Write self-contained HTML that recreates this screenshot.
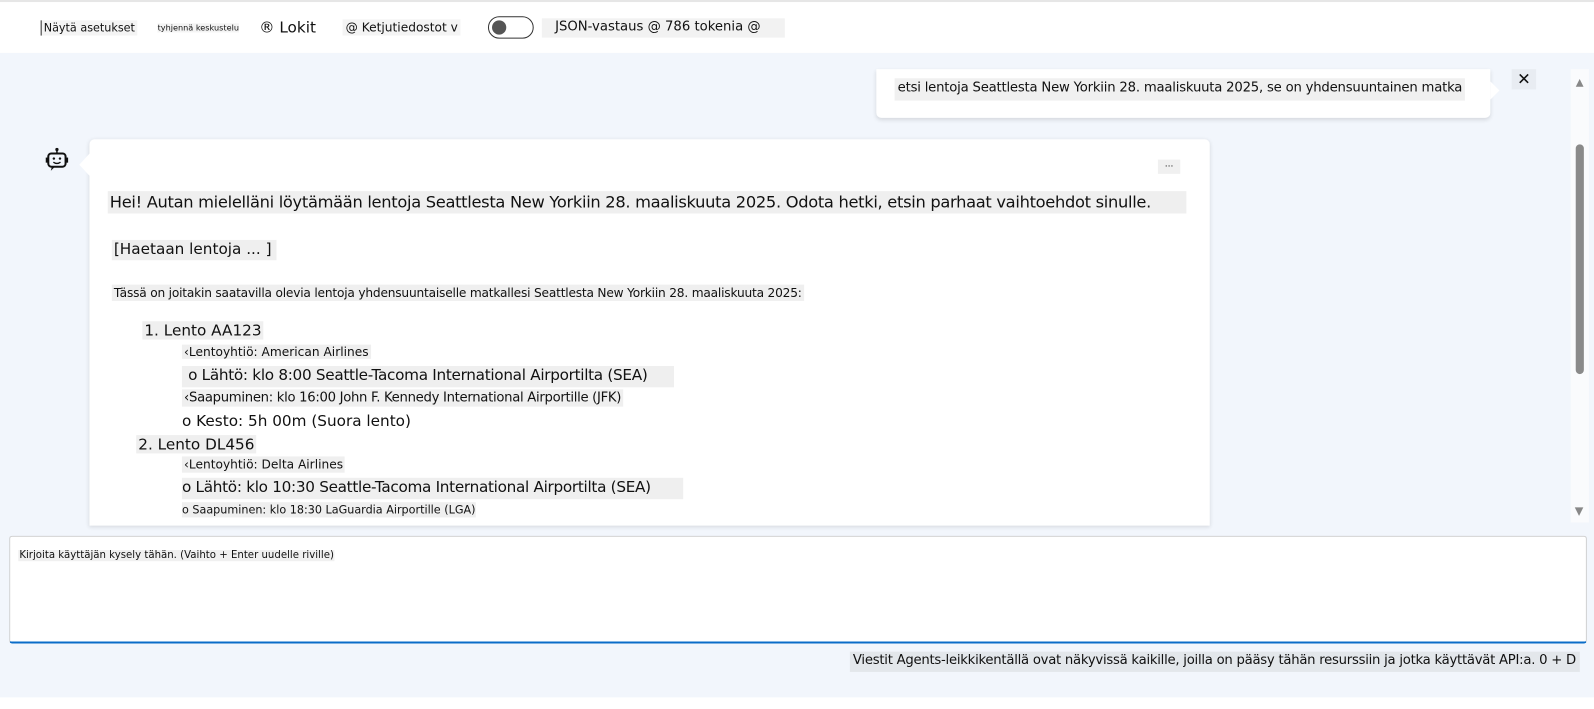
<!DOCTYPE html>
<html><head><meta charset="utf-8"><style>
*{margin:0;padding:0;box-sizing:border-box}
body{width:1594px;height:708px;background:#fff;font-family:"DejaVu Sans","Liberation Sans",sans-serif;color:#111;position:relative;overflow:hidden}
#w{position:absolute;left:0;top:0;width:1568px;height:697px;transform:scale(1.0166);transform-origin:0 0}
.a{position:absolute;white-space:nowrap}
.g{background:#efefef}
</style></head><body><div id="w">
<div class="a" style="left:0;top:0;width:1568px;height:2px;background:#e6e6e6"></div>
<div class="a" style="left:0;top:52px;width:1568px;height:634px;background:#f2f6fc"></div>
<!-- toolbar -->
<div class="a" style="left:40px;top:20px;font-size:11px;padding:1px 2px;border-left:1px solid #333;background:#f4f4f4">Näytä asetukset</div>
<div class="a" style="left:155px;top:23px;font-size:8px;background:#f4f4f4">tyhjennä keskustelu</div>
<div class="a" style="left:255px;top:18px;font-size:15px">® Lokit</div>
<div class="a" style="left:337px;top:19px;font-size:12px;background:#f4f4f4;padding:1px 3px">@ Ketjutiedostot v</div>
<div class="a" style="left:480px;top:16px;width:45px;height:22px;border:1.5px solid #333;border-radius:11px"><div style="position:absolute;left:3px;top:3px;width:14px;height:14px;border-radius:50%;background:#555"></div></div>
<div class="a" style="left:533px;top:18px;width:239px;height:19px;background:#f2f2f2;font-size:13px;padding:1px 0 0 13px">JSON-vastaus @ 786 tokenia @</div>
<!-- user bubble -->
<div class="a" style="left:862px;top:68px;width:604px;height:48px;background:#fff;border-radius:0 0 5px 5px;box-shadow:0 2px 4px rgba(0,0,0,.12)"></div>
<div class="a" style="left:1466px;top:80px;width:0;height:0;border-top:9px solid transparent;border-bottom:9px solid transparent;border-left:9px solid #fff"></div>
<div class="a" style="left:880px;top:77px;height:22px;background:#f0f0f0;font-size:13px;padding:2px 3px;letter-spacing:-0.2px">etsi lentoja Seattlesta New Yorkiin 28. maaliskuuta 2025, se on yhdensuuntainen matka</div>
<div class="a" style="left:1487px;top:68px;width:24px;height:20px;background:#e8ecf2;font-size:16px;text-align:center;line-height:20px">✕</div>
<!-- scrollbar -->
<div class="a" style="left:1545px;top:68px;width:18px;height:446px;background:#fafbfd"></div>
<div class="a" style="left:1550px;top:76px;font-size:10px;color:#888">▲</div>
<div class="a" style="left:1550px;top:142px;width:8px;height:226px;background:#8a8a8a;border-radius:4px"></div>
<div class="a" style="left:1549px;top:496px;font-size:11px;color:#888">▼</div>
<!-- bot -->
<svg class="a" style="left:44px;top:145px" width="24" height="26" viewBox="0 0 24 26"><circle cx="12" cy="2" r="1.6" fill="#111"/><line x1="12" y1="3" x2="12" y2="6" stroke="#111" stroke-width="1.5"/><rect x="3.5" y="6" width="17" height="13" rx="3" fill="none" stroke="#111" stroke-width="2"/><rect x="1" y="10" width="2.5" height="5" fill="#111"/><rect x="20.5" y="10" width="2.5" height="5" fill="#111"/><circle cx="9" cy="11" r="1.2" fill="#111"/><circle cx="15" cy="11" r="1.2" fill="#111"/><path d="M8.5 14.5q3.5 2.5 7 0" stroke="#111" stroke-width="1.4" fill="none"/><path d="M7 19l-1 4 4-4" fill="#111"/></svg>
<div class="a" style="left:88px;top:137px;width:1102px;height:380px;background:#fff;border-radius:5px 5px 0 0;box-shadow:0 1px 4px rgba(0,0,0,.12)"></div>
<div class="a" style="left:78px;top:150px;width:0;height:0;border-top:12px solid transparent;border-bottom:12px solid transparent;border-right:11px solid #fff"></div>
<div class="a" style="left:1139px;top:157px;width:22px;height:14px;background:#f0f0f0;font-size:9px;text-align:center">...</div>
<div class="a g" style="left:106px;top:188px;width:1061px;height:22px;font-size:16px;padding:1px 2px;letter-spacing:-0.3px">Hei! Autan mielelläni löytämään lentoja Seattlesta New Yorkiin 28. maaliskuuta 2025. Odota hetki, etsin parhaat vaihtoehdot sinulle.</div>
<div class="a g" style="left:110px;top:236px;width:162px;height:20px;font-size:15px;padding:0 2px">[Haetaan lentoja ... ]</div>
<div class="a g" style="left:110px;top:280px;font-size:12px;padding:1px 2px;letter-spacing:-0.2px">Tässä on joitakin saatavilla olevia lentoja yhdensuuntaiselle matkallesi Seattlesta New Yorkiin 28. maaliskuuta 2025:</div>
<div class="a g" style="left:140px;top:316px;font-size:15px;padding:0 2px">1. Lento AA123</div>
<div class="a g" style="left:179px;top:339px;font-size:12px;padding:0 2px">‹Lentoyhtiö: American Airlines</div>
<div class="a g" style="left:179px;top:360px;width:484px;height:21px;font-size:15px;padding:0 6px;letter-spacing:-0.3px">o Lähtö: klo 8:00 Seattle-Tacoma International Airportilta (SEA)</div>
<div class="a g" style="left:179px;top:383px;font-size:13px;padding:1px 2px;letter-spacing:-0.3px">‹Saapuminen: klo 16:00 John F. Kennedy International Airportille (JFK)</div>
<div class="a" style="left:179px;top:405px;font-size:15px">o Kesto: 5h 00m (Suora lento)</div>
<div class="a g" style="left:134px;top:428px;font-size:15px;padding:0 2px">2. Lento DL456</div>
<div class="a g" style="left:179px;top:449px;font-size:12px;padding:1px 2px">‹Lentoyhtiö: Delta Airlines</div>
<div class="a g" style="left:179px;top:470px;width:493px;height:21px;font-size:15px;padding:0 0;letter-spacing:-0.3px">o Lähtö: klo 10:30 Seattle-Tacoma International Airportilta (SEA)</div>
<div class="a g" style="left:179px;top:494px;font-size:11px;padding:1px 0">o Saapuminen: klo 18:30 LaGuardia Airportille (LGA)</div>
<!-- input -->
<div class="a" style="left:9px;top:527px;width:1552px;height:106px;background:#fff;border:1px solid #ccc;border-bottom:2px solid #0a6cc8;border-radius:3px"></div>
<div class="a" style="left:18px;top:541px;font-size:10px;background:#f0f0f0;padding:0 1px">Kirjoita käyttäjän kysely tähän. (Vaihto + Enter uudelle riville)</div>
<div class="a" style="left:836px;top:641px;width:718px;height:20px;background:#e3e7eb;font-size:13px;padding:1px 3px;letter-spacing:-0.25px">Viestit Agents-leikkikentällä ovat näkyvissä kaikille, joilla on pääsy tähän resurssiin ja jotka käyttävät API:a. 0 + D</div>
</div></body></html>
